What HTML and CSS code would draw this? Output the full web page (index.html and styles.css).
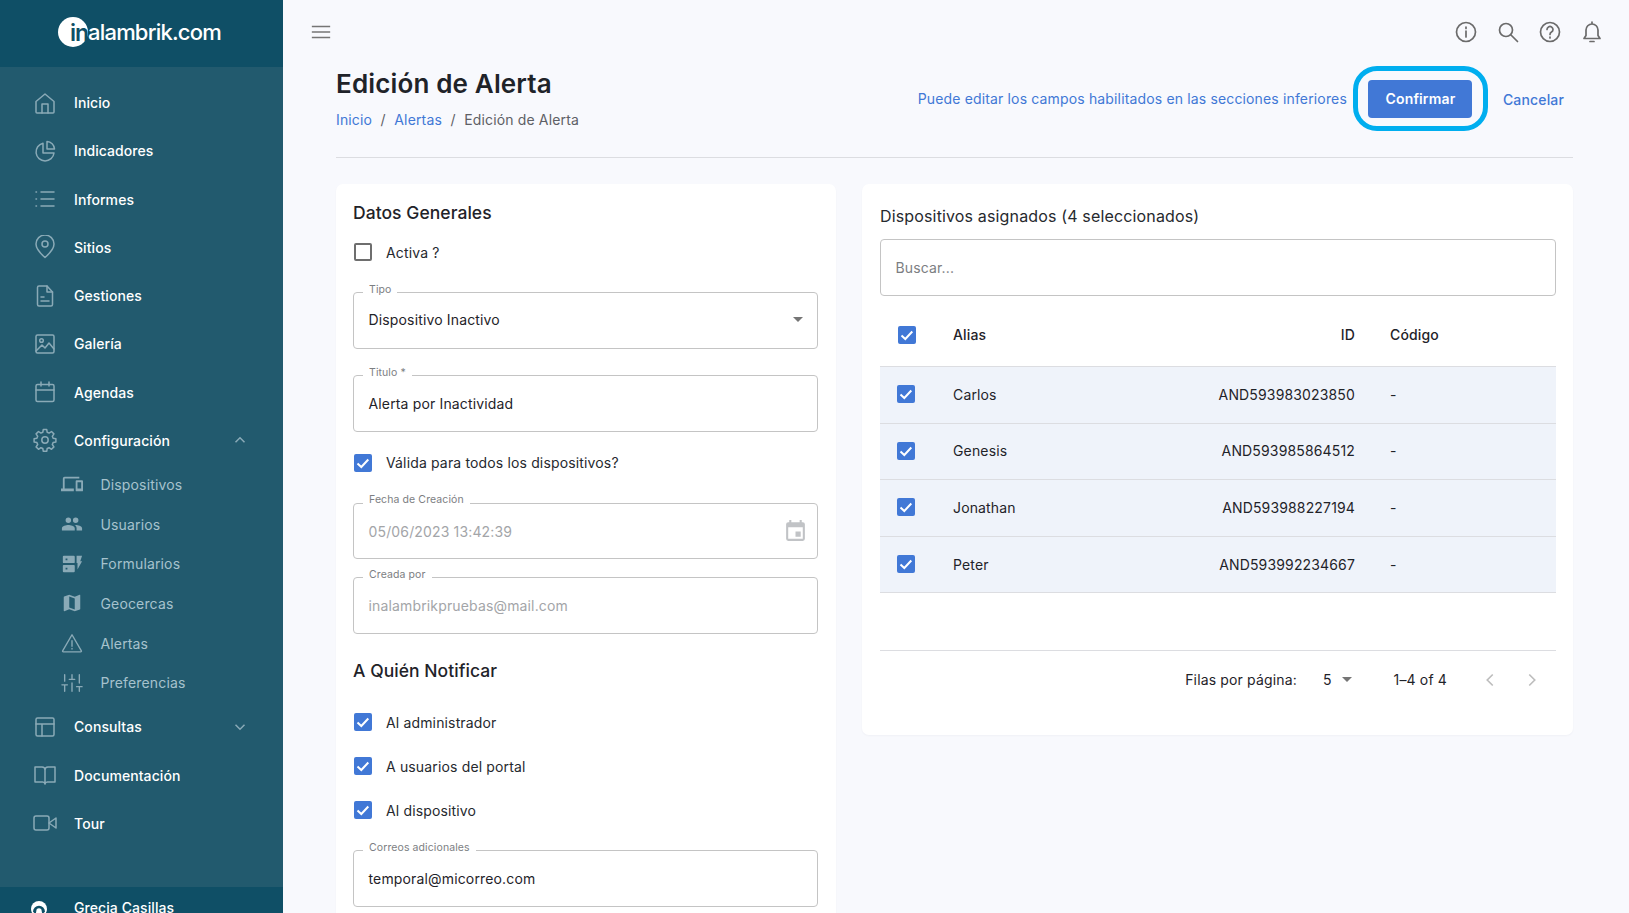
FILE: index.html
```html
<!DOCTYPE html>
<html lang="es">
<head>
<meta charset="utf-8">
<title>Edición de Alerta</title>
<link rel="stylesheet" href="styles.css">
</head>
<body>
<div class="app">
  <aside class="sidebar">
    <div class="brand">
      <span class="brand-mark">in</span><span class="brand-text">alambrik.com</span>
    </div>
    <nav class="nav">
      <a class="nav-item"><svg class="ico" viewBox="0 0 24 24"><path d="M3 21V10.500l9-7.500 9 7.500V21a1 1 0 0 1-1 1H4a1 1 0 0 1-1-1z"/><path d="M9 22v-9h6v9"/></svg>Inicio</a>
      <a class="nav-item"><svg class="ico" viewBox="0 0 24 24"><path d="M10 4.200A9 9 0 1 0 21 14h-11z"/><path d="M14 2.500A8 8 0 0 1 21.500 10H14z"/></svg>Indicadores</a>
      <a class="nav-item"><svg class="ico" viewBox="0 0 24 24"><path d="M8 5h13M8 12h13M8 19h13M3 5h.5M3 12h.5M3 19h.5"/></svg>Informes</a>
      <a class="nav-item"><svg class="ico" viewBox="0 0 24 24"><path d="M12 22.500s-9-8-9-13.500a9 9 0 0 1 18 0c0 5.500-9 13.500-9 13.500z"/><circle cx="12" cy="9" r="3"/></svg>Sitios</a>
      <a class="nav-item"><svg class="ico" viewBox="0 0 24 24"><path d="M14 2H6a1.500 1.500 0 0 0-1.500 1.500v17A1.500 1.500 0 0 0 6 22h12a1.500 1.500 0 0 0 1.500-1.500V8z"/><path d="M14 2v6h5.500M8 13h3M8 17h8"/></svg>Gestiones</a>
      <a class="nav-item"><svg class="ico" viewBox="0 0 24 24"><rect x="3" y="3" width="18" height="18" rx="1.500"/><circle cx="8.500" cy="8.500" r="1.800"/><path d="M3 19l6-6 3 3 4-5 5 6"/></svg>Galería</a>
      <a class="nav-item"><svg class="ico" viewBox="0 0 24 24"><rect x="3" y="4.500" width="18" height="17" rx="1.500"/><path d="M3 10h18M8 2v4M16 2v4"/></svg>Agendas</a>
      <a class="nav-item"><svg class="ico" viewBox="0 0 24 24"><circle cx="12" cy="12" r="3.200"/><path d="M10.300 1.500h3.400l.5 2.800 1.900.8 2.400-1.600 2.400 2.400-1.600 2.400.8 1.900 2.800.5v3.400l-2.800.5-.8 1.900 1.600 2.400-2.400 2.400-2.400-1.600-1.900.8-.5 2.800h-3.400l-.5-2.800-1.900-.8-2.400 1.600-2.400-2.400 1.600-2.400-.8-1.900-2.800-.5v-3.400l2.800-.5.8-1.900-1.600-2.400 2.400-2.400 2.400 1.600 1.900-.8z"/></svg>Configuración<svg class="chev" viewBox="0 0 24 24"><path d="M6 15l6-6 6 6"/></svg></a>
      <a class="nav-sub"><svg class="ico-fill" viewBox="0 0 24 24"><path d="M4 6h16V4H4a2 2 0 0 0-2 2v11H0v3h14v-3H4zm19 2h-6a1 1 0 0 0-1 1v10a1 1 0 0 0 1 1h6a1 1 0 0 0 1-1V9a1 1 0 0 0-1-1zm-1 9h-4v-7h4z"/></svg>Dispositivos</a>
      <a class="nav-sub"><svg class="ico-fill" viewBox="0 0 24 24"><path d="M16 11a3 3 0 1 0 0-6 3 3 0 0 0 0 6zm-8 0a3 3 0 1 0 0-6 3 3 0 0 0 0 6zm0 2c-2.300 0-7 1.200-7 3.500V19h14v-2.500C15 14.200 10.300 13 8 13zm8 0h-1c1.200.8 2 2 2 3.500V19h6v-2.500c0-2.300-4.700-3.500-7-3.500z"/></svg>Usuarios</a>
      <a class="nav-sub"><svg class="ico-fill" viewBox="0 0 24 24"><path d="M3 13h11a1 1 0 0 1 1 1v6a1 1 0 0 1-1 1H3a1 1 0 0 1-1-1v-6a1 1 0 0 1 1-1zm2 3v2h2v-2zM3 3h11a1 1 0 0 1 1 1v6a1 1 0 0 1-1 1H3a1 1 0 0 1-1-1V4a1 1 0 0 1 1-1zm2 3v2h2V6zm12-3h6l-2 6h2l-5 9v-7h-1z"/></svg>Formularios</a>
      <a class="nav-sub"><svg class="ico-fill" viewBox="0 0 24 24"><path d="M20.500 3l-.2.04L15 5.100 9 3 3.400 4.900c-.2.100-.4.300-.4.500V20.500c0 .3.200.5.500.5l.2-.04L9 18.900l6 2.100 5.600-1.900c.2-.1.400-.3.400-.5V3.500c0-.3-.2-.5-.5-.5zM15 19l-6-2.100V5l6 2.100z"/></svg>Geocercas</a>
      <a class="nav-sub"><svg class="ico" viewBox="0 0 24 24"><path d="M12 3L1.800 20.500a.8.800 0 0 0 .7 1.200h19a.8.800 0 0 0 .7-1.200z"/><path d="M12 9.500v6M12 18v.5"/></svg>Alertas</a>
      <a class="nav-sub"><svg class="ico" viewBox="0 0 24 24"><path d="M4 21v-7M4 10V3M12 21v-9M12 8V3M20 21v-5M20 12V3M1 14h6M9 8h6M17 16h6"/></svg>Preferencias</a>
      <a class="nav-item"><svg class="ico" viewBox="0 0 24 24"><rect x="3" y="3" width="18" height="18" rx="1.500"/><path d="M3 9h18M9 9v12"/></svg>Consultas<svg class="chev" viewBox="0 0 24 24"><path d="M6 9l6 6 6-6"/></svg></a>
      <a class="nav-item"><svg class="ico" viewBox="0 0 24 24"><path d="M2 4h7a3 3 0 0 1 3 3v14a2.500 2.500 0 0 0-2.500-2H2zM22 4h-7a3 3 0 0 0-3 3v14a2.500 2.500 0 0 1 2.500-2H22z"/></svg>Documentación</a>
      <a class="nav-item"><svg class="ico" viewBox="0 0 24 24"><rect x="1" y="5" width="15" height="14" rx="2"/><path d="M23 7l-7 5 7 5z"/></svg>Tour</a>
    </nav>
    <div class="user">
      <svg class="avatar" viewBox="0 0 24 24"><circle cx="12" cy="12" r="12" fill="#fff"/><path d="M3 16a9 9 0 0 1 18 0l-4 4-1-5a4 4 0 0 0-8 0l-1 5z" fill="#0f4f66"/></svg>
      <span>Grecia Casillas</span>
    </div>
  </aside>

  <main class="main">
    <div class="topbar">
      <svg class="menu" viewBox="0 0 24 24"><path d="M2 6h20M2 12h20M2 18h20"/></svg>
      <div class="top-icons">
        <svg class="top-ico" viewBox="0 0 24 24"><circle cx="12" cy="12" r="9.500"/><path d="M12 11v6M12 7v1.500"/></svg>
        <svg class="top-ico" viewBox="0 0 24 24"><circle cx="10" cy="10" r="6.500"/><path d="M15 15l6.500 6.500"/></svg>
        <svg class="top-ico" viewBox="0 0 24 24"><circle cx="12" cy="12" r="9.500"/><path d="M9 9.500a3 3 0 1 1 4.500 2.600c-1 .6-1.500 1.200-1.500 2.400M12 17v1"/></svg>
        <svg class="top-ico" viewBox="0 0 24 24"><path d="M12 4a6 6 0 0 0-6 6v5.500L4 18.500h16l-2-3V10a6 6 0 0 0-6-6zM12 2v2M10 21.500h4"/></svg>
      </div>
    </div>

    <div class="content">
      <header class="page-head">
        <div>
          <h1 class="page-title">Edición de Alerta</h1>
          <div class="crumbs"><a>Inicio</a><span class="sep">/</span><a>Alertas</a><span class="sep">/</span><span class="crumb-now">Edición de Alerta</span></div>
        </div>
        <div class="actions">
          <span class="hint">Puede editar los campos habilitados en las secciones inferiores</span>
          <span class="ring"><button class="btn-primary">Confirmar</button></span>
          <a class="btn-link">Cancelar</a>
        </div>
      </header>

      <div class="columns">
        <section class="card card-form">
          <h2 class="section-title">Datos Generales</h2>
          <label class="check-row check-first"><span class="cb"></span>Activa ?</label>
          <div class="field field-tipo">
            <span class="field-label">Tipo</span>
            <span class="field-value">Dispositivo Inactivo</span>
            <svg class="caret" viewBox="0 0 10 5"><path d="M0 0h10L5 5z"/></svg>
          </div>
          <div class="field field-titulo">
            <span class="field-label">Titulo *</span>
            <span class="field-value">Alerta por Inactividad</span>
          </div>
          <label class="check-row check-valid"><span class="cb on"><svg viewBox="0 0 18 18"><path d="M3.500 9.500l3.800 3.500 7-7.500"/></svg></span>Válida para todos los dispositivos?</label>
          <div class="field field-fecha">
            <span class="field-label">Fecha de Creación</span>
            <span class="field-value muted">05/06/2023 13:42:39</span>
            <svg class="cal" viewBox="0 0 24 24"><path d="M19 3h-1V1h-2v2H8V1H6v2H5a2 2 0 0 0-2 2v14a2 2 0 0 0 2 2h14a2 2 0 0 0 2-2V5a2 2 0 0 0-2-2zm0 16H5V8h14zm-7-7h5v5h-5z"/></svg>
          </div>
          <div class="field field-creada">
            <span class="field-label">Creada por</span>
            <span class="field-value muted">inalambrikpruebas@mail.com</span>
          </div>
          <h2 class="section-title notify-title">A Quién Notificar</h2>
          <label class="check-row check-a"><span class="cb on"><svg viewBox="0 0 18 18"><path d="M3.500 9.500l3.800 3.500 7-7.500"/></svg></span>Al administrador</label>
          <label class="check-row check-b"><span class="cb on"><svg viewBox="0 0 18 18"><path d="M3.500 9.500l3.800 3.500 7-7.500"/></svg></span>A usuarios del portal</label>
          <label class="check-row check-b"><span class="cb on"><svg viewBox="0 0 18 18"><path d="M3.500 9.500l3.800 3.500 7-7.500"/></svg></span>Al dispositivo</label>
          <div class="field field-correos">
            <span class="field-label">Correos adicionales</span>
            <span class="field-value">temporal@micorreo.com</span>
          </div>
        </section>

        <section class="card card-table">
          <h2 class="table-title">Dispositivos asignados (4 seleccionados)</h2>
          <div class="search">Buscar...</div>
          <div class="row row-head">
            <span class="cb on cb-head"><svg viewBox="0 0 18 18"><path d="M3.500 9.500l3.800 3.500 7-7.500"/></svg></span>
            <span>Alias</span><span class="col-id">ID</span><span class="col-code">Código</span>
          </div>
          <div class="row"><span class="cb on"><svg viewBox="0 0 18 18"><path d="M3.500 9.500l3.800 3.500 7-7.500"/></svg></span><span>Carlos</span><span class="col-id">AND593983023850</span><span class="col-code">-</span></div>
          <div class="row"><span class="cb on"><svg viewBox="0 0 18 18"><path d="M3.500 9.500l3.800 3.500 7-7.500"/></svg></span><span>Genesis</span><span class="col-id">AND593985864512</span><span class="col-code">-</span></div>
          <div class="row"><span class="cb on"><svg viewBox="0 0 18 18"><path d="M3.500 9.500l3.800 3.500 7-7.500"/></svg></span><span>Jonathan</span><span class="col-id">AND593988227194</span><span class="col-code">-</span></div>
          <div class="row"><span class="cb on"><svg viewBox="0 0 18 18"><path d="M3.500 9.500l3.800 3.500 7-7.500"/></svg></span><span>Peter</span><span class="col-id">AND593992234667</span><span class="col-code">-</span></div>
          <div class="pager">
            <span class="pager-label">Filas por página:</span>
            <span class="pager-size">5</span>
            <svg class="caret pager-caret" viewBox="0 0 10 5"><path d="M0 0h10L5 5z"/></svg>
            <span class="pager-range">1–4 of 4</span>
            <svg class="pager-nav" viewBox="0 0 24 24"><path d="M15 6l-6 6 6 6"/></svg>
            <svg class="pager-nav pager-next" viewBox="0 0 24 24"><path d="M9 6l6 6-6 6"/></svg>
          </div>
        </section>
      </div>
    </div>
  </main>
</div>
</body>
</html>
```
FILE: styles.css
```css
* { box-sizing: border-box; }
html, body { margin: 0; height: 100%; }
body {
  font-family: Inter, "Noto Sans", sans-serif;
  font-size: 14px;
  letter-spacing: .15px;
  color: #1f2329;
  background: #f8f9fd;
  overflow: hidden;
}
.app { display: flex; height: 913px; overflow: hidden; }

/* Sidebar */
.sidebar {
  width: 283px;
  flex: none;
  background: #225a6e;
  color: #fff;
  display: flex;
  flex-direction: column;
  overflow: hidden;
}
.brand {
  height: 67px;
  flex: none;
  background: #0f4f66;
  display: flex;
  align-items: center;
  padding-left: 58px;
}
.brand-mark {
  width: 30px;
  height: 30px;
  margin-bottom: 3px;
  border-radius: 50%;
  background: #fff;
  color: #0f4f66;
  font-weight: 600;
  font-size: 23px;
  letter-spacing: -1px;
  line-height: 32px;
  text-align: right;
  flex: none;
}
.brand-text {
  font-size: 22px;
  font-weight: 500;
  letter-spacing: -0.800px;
  margin-bottom: 3px;
}
.nav { padding-top: 11.500px; flex: none; }
.nav-item {
  height: 48.250px;
  display: flex;
  align-items: center;
  font-weight: 500;
  font-size: 14px;
  letter-spacing: .08px;
  padding-left: 33px;
  color: #fff;
}
.nav-sub {
  height: 39.700px;
  display: flex;
  align-items: center;
  padding-left: 61px;
  color: #a6c2cd;
  font-size: 14px;
}
.ico {
  width: 24px;
  height: 24px;
  margin-right: 17px;
  flex: none;
  fill: none;
  stroke: #8aaab7;
  stroke-width: 1.500;
  stroke-linecap: round;
  stroke-linejoin: round;
}
.nav-sub .ico { width: 22px; height: 22px; margin-right: 17.500px; }
.ico-fill {
  width: 22px;
  height: 22px;
  margin-right: 17.500px;
  flex: none;
  fill: #8aaab7;
}
.chev {
  width: 18px;
  height: 18px;
  margin-left: auto;
  margin-right: 34px;
  fill: none;
  stroke: #8aaab7;
  stroke-width: 2;
}
.user {
  margin-top: 39.300px;
  flex: none;
  height: 60px;
  background: #0f4f66;
  display: flex;
  align-items: flex-start;
  padding: 12px 0 0 31px;
  font-weight: 500;
  font-size: 14px;
  letter-spacing: .08px;
}
.avatar { width: 16px; height: 16px; margin-right: 27px; margin-top: 2px; flex: none; }

/* Main */
.main { flex: 1; min-width: 0; display: flex; flex-direction: column; }
.topbar {
  height: 62px;
  flex: none;
  display: flex;
  align-items: center;
  justify-content: space-between;
  padding: 2px 25px 0 27px;
}
.menu { width: 22px; height: 22px; fill: none; stroke: #757575; stroke-width: 1.600; }
.top-icons { display: flex; gap: 18px; }
.top-ico {
  width: 24px;
  height: 24px;
  fill: none;
  stroke: #6b6b6b;
  stroke-width: 1.700;
  stroke-linecap: round;
  stroke-linejoin: round;
}
.content { padding: 0 56px 0 53px; }
.page-head {
  height: 96px;
  display: flex;
  justify-content: space-between;
  border-bottom: 1px solid #dcdde1;
}
.page-title {
  margin: 5px 0 0;
  font-size: 26px;
  line-height: 34px;
  font-weight: 600;
  color: #1f2329;
}
.crumbs {
  margin-top: 9px;
  font-size: 14px;
  line-height: 20px;
  color: #5e6065;
}
.crumbs a { color: #4178d6; }
.sep { margin: 0 8.500px; }
.actions { display: flex; align-items: flex-start; padding-top: 4px; }
.hint { color: #4178d6; font-size: 14px; line-height: 20px; margin-top: 23px; margin-right: 6px; }
.ring {
  width: 135px;
  height: 65px;
  border: 5px solid #00aeef;
  border-radius: 24px;
  display: flex;
  align-items: center;
  justify-content: center;
}
.btn-primary {
  width: 104px;
  height: 38px;
  border: 0;
  border-radius: 4px;
  background: #4178d6;
  color: #fff;
  font: 600 14px Inter, sans-serif;
  letter-spacing: .15px;
}
.btn-link { color: #4178d6; font-weight: 500; font-size: 14px; line-height: 20px; margin: 24px 9px 0 15px; }

.columns { display: flex; align-items: flex-start; gap: 26px; margin-top: 26px; }
.card { background: #fff; border-radius: 7px; box-shadow: 0 1px 2px rgba(40, 50, 80, .04); }
.card-form { width: 500px; flex: none; height: 780px; padding: 0 18px 0 17px; }
.card-table { flex: 1; height: 551px; padding: 0 17px 0 18px; }

.section-title { margin: 0; font-size: 17.500px; line-height: 24px; font-weight: 500; letter-spacing: .05px; padding-top: 17px; height: 41px; }
.check-row { display: flex; align-items: center; height: 22px; color: #26292e; }
.check-first { margin-top: 16px; }
.check-valid { margin-top: 20px; }
.check-a { margin-top: 28.500px; }
.check-b { margin-top: 22px; }
.cb {
  width: 18px;
  height: 18px;
  flex: none;
  margin: 0 14px 0 1px;
  border: 2px solid #6e6e6e;
  border-radius: 2px;
  display: flex;
}
.cb.on { border: 0; background: #4178d6; }
.cb svg { width: 18px; height: 18px; fill: none; stroke: #fff; stroke-width: 2; }
.field {
  position: relative;
  height: 56.500px;
  border: 1px solid #c4c4c4;
  border-radius: 4px;
  display: flex;
  align-items: center;
  padding: 0 15px 0 14.500px;
  justify-content: space-between;
}
.field-label {
  position: absolute;
  top: -10.500px;
  left: 9px;
  height: 14px;
  padding: 0 6px;
  background: #fff;
  font-size: 10.500px;
  letter-spacing: .1px;
  line-height: 14px;
  color: #7c7e82;
}
.field-value { font-size: 14px; }
.muted { color: #a3a5a8; }
.field-tipo { margin-top: 29px; padding-bottom: 1px; }
.field-titulo { margin-top: 26.500px; padding-top: 1px; }
.field-fecha { margin-top: 29px; padding-top: 1px; }
.field-creada { margin-top: 18px; padding-top: 1px; }
.notify-title { margin-top: 8px; margin-bottom: 1px; }
.field-correos { margin-top: 29px; }
.caret { width: 10px; height: 5px; fill: #757575; }
.field .caret { margin-right: -1px; }
.cal { width: 25px; height: 25px; fill: #c1c3c6; margin-right: -5.500px; }

.table-title { margin: 0; font-size: 16px; font-weight: 400; line-height: 22px; padding-top: 21px; height: 55px; color: #26292e; }
.search {
  height: 57px;
  border: 1px solid #c4c4c4;
  border-radius: 4px;
  display: flex;
  align-items: center;
  padding: 0 0 1px 14.500px;
  color: #7c7e82;
}
.row {
  display: grid;
  grid-template-columns: 73px 262px 140px 1fr;
  align-items: center;
  height: 56.600px;
  padding-bottom: 1px;
  background: #eff3fa;
  border-bottom: 1px solid #dcdde1;
}
.row .cb { margin: 0 0 0 17px; }
.row-head {
  height: 63px;
  margin-top: 8px;
  background: #fff;
  font-weight: 500;
}
.row .cb-head { margin-left: 18px; }
.col-id { text-align: right; }
.col-code { padding-left: 35px; }
.pager {
  margin-top: 57px;
  border-top: 1px solid #dcdde1;
  height: 60px;
  display: flex;
  align-items: center;
  justify-content: flex-end;
  padding: 0 13px 2px 0;
}
.pager-size { margin-left: 26px; }
.pager-caret { margin-left: 10px; }
.pager-range { margin-left: 42px; }
.pager-nav { width: 22px; height: 22px; fill: none; stroke: #bdbdbd; stroke-width: 1.800; margin-left: 20px; }
.pager-range + .pager-nav { margin-left: 32px; }
```
